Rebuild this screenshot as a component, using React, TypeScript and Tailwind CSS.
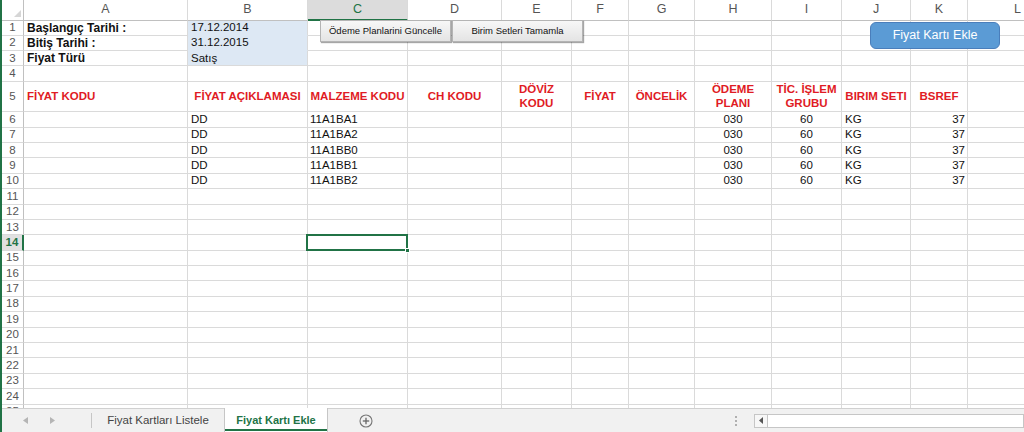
import React from 'react';

type ColDef = { k: string; w: string };

const COLS: ColDef[] = [
  { k: 'A', w: 'w-[164px]' },
  { k: 'B', w: 'w-[120px]' },
  { k: 'C', w: 'w-[100px]' },
  { k: 'D', w: 'w-[94px]' },
  { k: 'E', w: 'w-[70px]' },
  { k: 'F', w: 'w-[57px]' },
  { k: 'G', w: 'w-[66px]' },
  { k: 'H', w: 'w-[77px]' },
  { k: 'I', w: 'w-[70px]' },
  { k: 'J', w: 'w-[69px]' },
  { k: 'K', w: 'w-[57px]' },
  { k: 'L', w: 'w-[100px]' },
];

type CellSpec = { c?: React.ReactNode; cls?: string; inner?: React.ReactNode };
type RowDef = { n: number; h: string; cells: Record<string, CellSpec>; sel?: boolean };

const RED = 'text-[#e01b24] font-bold text-[11.5px] leading-[14px] text-center justify-center';

const blue = 'bg-[#dde8f4]';

const rows: RowDef[] = [
  {
    n: 1,
    h: 'h-[15.3px]',
    cells: {
      A: { c: 'Başlangıç Tarihi :', cls: 'font-bold text-[12px] pl-[3px]' },
      B: { c: '17.12.2014', cls: `${blue} border-b-[#dde8f4] pl-[3px]` },
    },
  },
  {
    n: 2,
    h: 'h-[15.3px]',
    cells: {
      A: { c: 'Bitiş Tarihi :', cls: 'font-bold text-[12px] pl-[3px]' },
      B: { c: '31.12.2015', cls: `${blue} border-b-[#dde8f4] pl-[3px]` },
    },
  },
  {
    n: 3,
    h: 'h-[15.3px]',
    cells: {
      A: { c: 'Fiyat Türü', cls: 'font-bold text-[12px] pl-[3px]' },
      B: { c: 'Satış', cls: `${blue} pl-[3px]` },
    },
  },
  { n: 4, h: 'h-[15.3px]', cells: {} },
  {
    n: 5,
    h: 'h-[30.5px]',
    cells: {
      A: { c: 'FİYAT KODU', cls: 'text-[#e01b24] font-bold text-[11.5px] pl-[3px]' },
      B: { c: 'FİYAT AÇIKLAMASI', cls: RED },
      C: { c: 'MALZEME KODU', cls: RED },
      D: { c: 'CH KODU', cls: RED },
      E: { c: <span>DÖVİZ<br />KODU</span>, cls: RED },
      F: { c: 'FİYAT', cls: RED },
      G: { c: 'ÖNCELİK', cls: RED },
      H: { c: <span>ÖDEME<br />PLANI</span>, cls: RED },
      I: { c: <span>TİC. İŞLEM<br />GRUBU</span>, cls: RED },
      J: { c: 'BIRIM SETI', cls: RED },
      K: { c: 'BSREF', cls: RED },
    },
  },
];

const codes = ['11A1BA1', '11A1BA2', '11A1BB0', '11A1BB1', '11A1BB2'];
codes.forEach((code, i) => {
  rows.push({
    n: 6 + i,
    h: 'h-[15.4px]',
    cells: {
      B: { c: 'DD', cls: 'pl-[3px]' },
      C: { c: code, cls: 'pl-[2px]' },
      H: { c: '030', cls: 'justify-center' },
      I: { c: '60', cls: 'justify-center' },
      J: { c: 'KG', cls: 'pl-[3px]' },
      K: { c: '37', cls: 'justify-end pr-[2px]' },
    },
  });
});

for (let n = 11; n <= 25; n++) {
  const cells: Record<string, CellSpec> = {};
  if (n === 14) {
    cells.C = {
      cls: 'relative',
      inner: (
        <>
          <div className="absolute left-[-2px] top-[-1.5px] right-[-1px] bottom-[-1px] border-2 border-[#217346]" />
          <div className="absolute right-[-3px] bottom-[-3px] w-[5px] h-[5px] bg-[#217346] border border-white" />
        </>
      ),
    };
  }
  rows.push({ n, h: 'h-[15.4px]', cells, sel: n === 14 });
}

function Row({ r }: { r: RowDef }) {
  return (
    <div className={`flex shrink-0 ${r.h}`}>
      <div
        className={`w-[22px] shrink-0 flex items-center justify-center text-[11.5px] border-b border-b-[#dadada] ${
          r.sel
            ? 'bg-[#e1e1e1] text-[#217346] font-bold border-r-2 border-r-[#217346]'
            : 'bg-white text-[#555] border-r border-r-[#c0c0c0]'
        }`}
      >
        {r.n}
      </div>
      {COLS.map((col) => {
        const s = r.cells[col.k] || {};
        return (
          <div
            key={col.k}
            className={`${col.w} shrink-0 flex items-center whitespace-nowrap text-[11.5px] text-[#111] border-r border-b border-[#dadada] ${s.cls ?? ''}`}
          >
            {s.c}
            {s.inner}
          </div>
        );
      })}
    </div>
  );
}

function HeaderRow() {
  return (
    <div className="flex shrink-0 h-[20.5px]">
      <div className="w-[22px] shrink-0 relative bg-white border-r border-b border-[#c0c0c0]">
        <svg className="absolute right-[2px] bottom-[3px]" width="7" height="7" viewBox="0 0 7 7">
          <polygon points="7,0 7,7 0,7" fill="#d6d6d6" />
        </svg>
      </div>
      {COLS.map((col) => (
        <div
          key={col.k}
          className={`${col.w} shrink-0 flex items-center justify-center text-[12.5px] border-r border-r-[#dadada] ${
            col.k === 'C'
              ? 'bg-[#dcdcdc] text-[#217346] border-b-2 border-b-[#217346]'
              : 'bg-white text-[#555] border-b border-b-[#c0c0c0]'
          }`}
        >
          {col.k}
        </div>
      ))}
    </div>
  );
}

function GrayButton({ label, cls }: { label: string; cls: string }) {
  return (
    <div
      className={`absolute top-[20px] h-[22px] w-[131px] flex items-center justify-center text-[9.5px] text-[#111] bg-gradient-to-b from-[#f7f7f7] to-[#e4e4e4] border border-[#b4b4b4] shadow-[1px_1px_1px_rgba(0,0,0,0.35)] ${cls}`}
    >
      {label}
    </div>
  );
}

export default function App() {
  return (
    <div className="w-[1024px] h-[432px] overflow-hidden bg-white border-l-2 border-[#217346] flex flex-col font-['Liberation_Sans',Arial,sans-serif]">
      <div className="flex-1 relative overflow-hidden flex flex-col">
        <HeaderRow />
        {rows.map((r) => (
          <Row key={r.n} r={r} />
        ))}
        <GrayButton label="Ödeme Planlarini Güncelle" cls="left-[318px]" />
        <GrayButton label="Birim Setleri Tamamla" cls="left-[450px]" />
        <div className="absolute left-[868px] top-[22px] w-[130px] h-[27px] rounded-[6px] bg-[#5b9bd5] border border-[#4a7ebb] flex items-center justify-center text-white text-[12.5px]">
          Fiyat Kartı Ekle
        </div>
      </div>
      <div className="h-[24px] shrink-0 flex items-stretch bg-[#f1f1f1] border-t border-[#d0d0d0]">
        <div className="w-[89px] shrink-0 flex items-center">
          <svg className="ml-[21px]" width="5" height="7" viewBox="0 0 5 7">
            <polygon points="5,0 5,7 0,3.5" fill="#b5b5b5" />
          </svg>
          <svg className="ml-[22px]" width="5" height="7" viewBox="0 0 5 7">
            <polygon points="0,0 0,7 5,3.5" fill="#b5b5b5" />
          </svg>
        </div>
        <div className="w-px shrink-0 bg-[#c6c6c6] my-[4px]" />
        <div className="w-[132px] shrink-0 flex items-center justify-center text-[11.5px] text-[#444]">
          Fiyat Kartları Listele
        </div>
        <div className="w-[104px] shrink-0 relative bg-white border-l border-r border-[#c6c6c6] -mt-px flex items-center justify-center text-[11px] font-bold text-[#217346]">
          Fiyat Kartı Ekle
          <div className="absolute left-0 right-0 bottom-[1px] h-[2px] bg-[#217346]" />
        </div>
        <div className="w-[76px] shrink-0 flex items-center justify-center">
          <svg width="14" height="14" viewBox="0 0 14 14">
            <circle cx="7" cy="7" r="6" fill="none" stroke="#777" strokeWidth="1.1" />
            <line x1="7" y1="3.8" x2="7" y2="10.2" stroke="#666" strokeWidth="1.3" />
            <line x1="3.8" y1="7" x2="10.2" y2="7" stroke="#666" strokeWidth="1.3" />
          </svg>
        </div>
        <div className="flex-1" />
        <div className="w-[20px] shrink-0 flex items-center justify-start">
          <svg width="4" height="12" viewBox="0 0 4 12">
            <circle cx="2" cy="2" r="1" fill="#9a9a9a" />
            <circle cx="2" cy="6" r="1" fill="#9a9a9a" />
            <circle cx="2" cy="10" r="1" fill="#9a9a9a" />
          </svg>
        </div>
        <div className="w-[270px] shrink-0 flex items-center">
          <div className="w-full h-[14px] flex border border-[#c6c6c6] bg-white">
            <div className="w-[13px] shrink-0 flex items-center justify-center border-r border-[#c6c6c6] bg-[#f7f7f7]">
              <svg width="4" height="7" viewBox="0 0 4 7">
                <polygon points="4,0 4,7 0,3.5" fill="#555" />
              </svg>
            </div>
            <div className="flex-1" />
          </div>
        </div>
      </div>
    </div>
  );
}
